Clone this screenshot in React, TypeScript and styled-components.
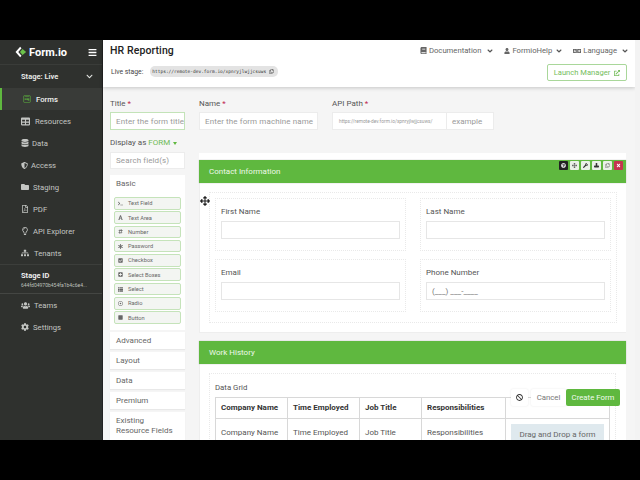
import React from "react";
import styled, { createGlobalStyle } from "styled-components";
import {
  FaAngleDown, FaBars, FaBook, FaUser, FaLanguage, FaExternalLinkAlt, FaRegCopy, FaDatabase, FaShieldAlt, FaFolder,
  FaRegFilePdf, FaRegLightbulb, FaSitemap, FaUsers, FaCog, FaArrowsAlt, FaTerminal, FaFont, FaHashtag, FaAsterisk,
  FaCheckSquare, FaPlusSquare, FaThList, FaRegDotCircle, FaStop, FaBan, FaWrench, FaStamp, FaTimes, FaQuestionCircle,
  FaWpforms, FaTable, FaChevronDown,
} from "react-icons/fa";

const Global = createGlobalStyle`
  html, body { margin: 0; padding: 0; background: #000; }
  body { font-family: Roboto, "Liberation Sans", sans-serif; }
  * { box-sizing: border-box; }
`;

const Screen = styled.div`
  width: 640px; height: 480px; padding: 40px 0; background: #000; overflow: hidden;
`;
const Frame = styled.div`
  position: relative; width: 640px; height: 400px; display: flex; overflow: hidden; background: #f5f5f5;
`;
const Sidebar = styled.nav`
  width: 103px; flex: none; background: #2f312e; color: #d9dbd8; display: flex; flex-direction: column;
  border-right: 1px solid #222;
`;
const Brand = styled.div`
  height: 25px; display: flex; align-items: center; padding: 0 5px 0 15px; color: #fff;
  border-bottom: 1px solid #3a3c39; flex: none;
`;
const BrandName = styled.span`
  font-size: 11px; font-weight: 700; margin-left: 2px; flex: 1;
`;
const StageRow = styled.div`
  height: 23px; display: flex; align-items: center; justify-content: space-between; padding: 0 9px 0 21px;
  font-size: 7.5px; font-weight: 700; color: #e4e6e3; flex: none;
`;
const NavItem = styled.div<{ $active?: boolean; $gap: number }>`
  height: 22px; display: flex; align-items: center; gap: ${p => p.$gap}px; font-size: 7.7px; flex: none;
  padding-left: ${p => (p.$active ? 23 : 21)}px; color: ${p => (p.$active ? "#f2f2f2" : "#c4c6c3")};
  font-weight: ${p => (p.$active ? 500 : 400)};
  background: ${p => (p.$active ? "#393b38" : "transparent")};
  box-shadow: ${p => (p.$active ? "inset 2px 0 0 #5fb83f" : "none")};
`;
const StageId = styled.div`
  height: 30px; flex: none; padding: 6px 0 0 21px; border-top: 1px solid #3c3e3b; border-bottom: 1px solid #444643;
  display: flex; flex-direction: column; gap: 2px;
`;
const StageIdLabel = styled.span`
  font-size: 7.5px; font-weight: 700; color: #eee; line-height: 9px;
`;
const StageIdValue = styled.span`
  font-size: 5px; color: #bfc1be; line-height: 7px; white-space: nowrap;
`;
const Main = styled.div`
  flex: 1; min-width: 0; display: flex; flex-direction: column;
`;
const Header = styled.header`
  height: 47px; width: 532px; flex: none; background: #fff; box-shadow: 0 1px 4px rgba(0,0,0,.2);
  display: flex; justify-content: space-between; padding: 3px 8px 0 7px; position: relative;
`;
const HeadLeft = styled.div`
  display: flex; flex-direction: column; gap: 8px; padding-top: 1px;
`;
const Title = styled.h1`
  margin: 0; font-size: 10.5px; font-weight: 500; color: #222; line-height: 14px; letter-spacing: .1px;
`;
const LiveRow = styled.div`
  display: flex; align-items: center; gap: 7px; font-size: 6.8px; color: #444; padding-left: 1px;
`;
const UrlPill = styled.span`
  display: inline-flex; align-items: center; gap: 3px; height: 11px; padding: 0 4px 0 2px; border-radius: 5px;
  background: #e3e3e3; font-family: "DejaVu Sans Mono", monospace; font-size: 4.5px; color: #333;
`;
const HeadRight = styled.div`
  display: flex; flex-direction: column; align-items: flex-end; gap: 7px;
`;
const TopLinks = styled.div`
  display: flex; gap: 10px; height: 14px; align-items: center; padding-top: 1px; margin-right: -2px;
`;
const TopLink = styled.span`
  display: inline-flex; align-items: center; gap: 2px; font-size: 7.7px; color: #666;
`;
const LinkChevron = styled(FaAngleDown)<{ $gap: number }>`
  margin-left: ${p => p.$gap}px; font-size: 8px; color: #555;
`;
const LaunchBtn = styled.span`
  display: inline-flex; align-items: center; gap: 4px; height: 17px; width: 80px; justify-content: center;
  border: 1px solid #a9d79a; border-radius: 2px; font-size: 7.6px; color: #75bd5c; background: #fff;
`;
const Content = styled.div`
  flex: 1; min-height: 0; display: flex; flex-direction: column; padding: 12px 14px 0 7px; overflow: hidden;
`;
const TopForm = styled.div`
  display: flex; flex: none; gap: 14px;
`;
const FieldBlock = styled.div<{ $w: number }>`
  width: ${p => p.$w}px; display: flex; flex-direction: column; gap: 3px; flex: none;
`;
const Label = styled.label`
  font-size: 8px; line-height: 10px; color: #555; height: 10px;
`;
const Req = styled.span`
  color: #c0264e;
`;
const TextInput = styled.div<{ $focus?: boolean }>`
  height: 18px; padding: 0 5px; display: flex; align-items: center; background: #fff; overflow: hidden; white-space: nowrap; flex: none;
  border: 1px solid ${p => (p.$focus ? "#c3e3b8" : "#ececec")}; font-size: 8px; color: #999; letter-spacing: .1px;
`;
const PathRow = styled.div`
  display: flex; width: 162px; height: 18px;
`;
const PathPrefix = styled.div`
  width: 115px; display: flex; align-items: center; padding-left: 6px; border: 1px solid #ececec; background: #fff;
  font-size: 4.8px; color: #999; white-space: nowrap;
`;
const PathInput = styled.div`
  flex: 1; display: flex; align-items: center; padding-left: 5px; border: 1px solid #ececec; border-left: 0;
  background: #fff; font-size: 8px; color: #999;
`;
const Columns = styled.div`
  display: flex; flex: 1; min-height: 0; margin-top: 8px; gap: 14px;
`;
const Palette = styled.aside`
  width: 75px; flex: none; display: flex; flex-direction: column;
`;
const DisplayAs = styled.div`
  font-size: 8px; color: #555; line-height: 10px; height: 10px; display: flex; align-items: center; gap: 2px; flex: none;
`;
const Green = styled.span`
  color: #6fbb55;
`;
const Caret = styled.span`
  width: 0; height: 0; border-left: 2.5px solid transparent; border-right: 2.5px solid transparent; border-top: 3px solid #5fb83f; margin-left: 1px;
`;
const Search = styled(TextInput)`
  margin-top: 4px; height: 17px; margin-bottom: 6px;
`;
const Accordion = styled.div<{ $tall?: boolean }>`
  background: #fff; padding: ${p => (p.$tall ? "4px 0 0 6px" : "0 0 0 6px")}; font-size: 8px; color: #666;
  min-height: ${p => (p.$tall ? "32px" : "17px")}; line-height: ${p => (p.$tall ? "10.5px" : "17px")};
  box-shadow: 0 1px 1px rgba(0,0,0,.05); margin-bottom: 3px; flex: none;
`;
const BasicHead = styled.div`
  background: #fff; height: 17px; line-height: 17px; padding-left: 6px; font-size: 8px; color: #666; flex: none;
`;
const BasicBody = styled.div`
  background: #fff; padding: 5px 4px 6px 4px; display: flex; flex-direction: column; gap: 1.8px; margin-bottom: 2px; flex: none;
`;
const Comp = styled.div`
  height: 12.5px; flex: none; display: flex; align-items: center; gap: 5px; padding-left: 3px; border: 1px solid #c5e3ba;
  border-radius: 2px; background: #f3f5f2; color: #666; font-size: 5.7px; white-space: nowrap;
`;
const Canvas = styled.section`
  flex: 1; min-width: 0; background: #fff; margin-top: 15px; padding-top: 7px; display: flex; flex-direction: column; width: 427px;
`;
const PanelBar = styled.div`
  position: relative; height: 23px; flex: none; background: #5fb83f; color: #eef8ea; font-size: 8px;
  display: flex; align-items: center; padding-left: 10px; box-shadow: 0 0 1px rgba(0,0,0,.3);
`;
const Tools = styled.div`
  position: absolute; top: 1px; right: 3px; display: flex; gap: 2px;
`;
const Tool = styled.span<{ $bg: string; $fg: string }>`
  width: 9px; height: 9px; display: flex; align-items: center; justify-content: center; font-size: 5px;
  background: ${p => p.$bg}; color: ${p => p.$fg}; border-radius: 1px;
`;
const ContactBody = styled.div`
  height: 150px; padding: 9px 0 0 9px; flex: none; background: #fff; border-bottom: 1px solid #eee; border-left: 1px solid #eee;
`;
const Dotted = styled.div`
  border: 1px dotted #e9e9e9; width: 408px; height: 131px;
  display: grid; grid-template-columns: 191px 191px; column-gap: 14px; row-gap: 8px; padding: 5px 0 0 5px;
  grid-auto-rows: 53px;
`;
const FieldCell = styled.div`
  border: 1px dotted #e9e9e9; padding: 8px 5px 0 5px; display: flex; flex-direction: column; gap: 4px;
`;
const CellLabel = styled.span`
  font-size: 8px; color: #555; line-height: 10px;
`;
const CellInput = styled.div`
  height: 18px; border: 1px solid #e6e6e6; background: #fff; display: flex; align-items: center; padding-left: 5px;
  font-size: 8px; color: #777;
`;
const WorkBody = styled.div`
  flex: 1; padding: 9px 0 0 9px; background: #fff; overflow: hidden; border-left: 1px solid #eee;
`;
const GridBox = styled.div`
  border: 1px dotted #e9e9e9; width: 407px; height: 100px; padding: 9px 0 0 5px;
`;
const GridLabel = styled.div`
  font-size: 7.8px; color: #555; line-height: 10px; margin-bottom: 4px;
`;
const GridTable = styled.div`
  display: grid; grid-template-columns: 72px 72px 62px 84px 104px; width: 394px;
  border-top: 1px solid #d8d8d8; border-left: 1px solid #d8d8d8;
`;
const Cell = styled.div<{ $head?: boolean }>`
  height: ${p => (p.$head ? "21px" : "40px")}; border-right: 1px solid #d8d8d8; border-bottom: 1px solid #d8d8d8; padding: 0 0 0 5px;
  display: flex; align-items: ${p => (p.$head ? "center" : "flex-start")}; font-size: 8px; color: ${p => (p.$head ? "#333" : "#555")};
  font-weight: ${p => (p.$head ? 700 : 400)}; white-space: nowrap;
  line-height: 14px; padding-top: ${p => (p.$head ? "0" : "7px")};
`;
const DropCell = styled(Cell)`
  padding: 5px 5px 0 5px;
`;
const DropZone = styled.div`
  width: 93px; height: 30px; background: #dfe9ee; color: #666; display: flex; justify-content: center; padding-top: 4px; font-size: 8px; font-weight: 400;
`;
const FloatActions = styled.div`
  position: absolute; left: 511px; top: 349px; display: flex; align-items: center; gap: 3px;
`;
const BanBtn = styled.span`
  width: 17px; height: 17px; background: #fff; display: flex; align-items: center; justify-content: center; color: #333; border-radius: 2px;
  font-size: 7px; box-shadow: 0 0 2px rgba(0,0,0,.1);
`;
const CancelBtn = styled.span`
  width: 35px; height: 17px; background: #fff; display: flex; align-items: center; justify-content: center; color: #777; font-size: 7.8px;
  border-radius: 2px; box-shadow: 0 0 2px rgba(0,0,0,.1);
`;
const CreateBtn = styled.span`
  width: 54px; height: 17px; margin-left: -3px; background: #5fb83f; color: #f2faef; display: flex; align-items: center; justify-content: center; font-size: 7.8px; border-radius: 2px;
`;
const DragCursor = styled.span`
  position: absolute; left: 200px; top: 156px; color: #222; display: flex; font-size: 10px;
`;
const Gutter = styled.div`
  position: absolute; right: 0; top: 0; width: 5px; height: 100%; background: #f3f3f3;
`;
const Spacer = styled.div`
  height: 8px; flex: none; background: #f5f5f5;
`;

const FormioLogo = () => (
  <svg width="12" height="12" viewBox="0 0 14 14" aria-hidden="true">
    <path d="M6 1 L0.6 7 L6 13 L7.6 11.4 L3.8 7 L7.6 2.6 Z" fill="#fff" />
    <path d="M8.8 3.4 L13 7 L8.8 10.6 L5.8 7 Z" fill="#6cc24a" />
  </svg>
);

const navTop = [
  { icon: <FaTable size={9} />, label: "Resources", gap: 5 },
  { icon: <FaDatabase size={8} />, label: "Data", gap: 3 },
  { icon: <FaShieldAlt size={7} />, label: "Access", gap: 3 },
  { icon: <FaFolder size={8} />, label: "Staging", gap: 4 },
  { icon: <FaRegFilePdf size={8} />, label: "PDF", gap: 4 },
  { icon: <FaRegLightbulb size={8} />, label: "API Explorer", gap: 4 },
  { icon: <FaSitemap size={8} />, label: "Tenants", gap: 5 },
];

const comps = [
  { icon: <FaTerminal size={5} />, label: "Text Field" },
  { icon: <FaFont size={5} />, label: "Text Area" },
  { icon: <FaHashtag size={5} />, label: "Number" },
  { icon: <FaAsterisk size={5} />, label: "Password" },
  { icon: <FaCheckSquare size={5} />, label: "Checkbox" },
  { icon: <FaPlusSquare size={5} />, label: "Select Boxes" },
  { icon: <FaThList size={5} />, label: "Select" },
  { icon: <FaRegDotCircle size={5} />, label: "Radio" },
  { icon: <FaStop size={5} />, label: "Button" },
];

export default function App() {
  return (
    <Screen>
      <Global />
      <Frame>
        <Sidebar>
          <Brand>
            <FormioLogo />
            <BrandName>Form.io</BrandName>
            <FaBars size={9} />
          </Brand>
          <StageRow>
            Stage: Live
            <FaChevronDown size={7} />
          </StageRow>
          <NavItem $active $gap={5}>
            <FaWpforms size={8} color="#5fb83f" />
            Forms
          </NavItem>
          {navTop.map(n => (
            <NavItem key={n.label} $gap={n.gap}>
              {n.icon}
              {n.label}
            </NavItem>
          ))}
          <StageId>
            <StageIdLabel>Stage ID</StageIdLabel>
            <StageIdValue>644fd04970b454fa1b4c6e4...</StageIdValue>
          </StageId>
          <NavItem $gap={4}>
            <FaUsers size={9} />
            Teams
          </NavItem>
          <NavItem $gap={4}>
            <FaCog size={8} />
            Settings
          </NavItem>
        </Sidebar>
        <Main>
          <Header>
            <HeadLeft>
              <Title>HR Reporting</Title>
              <LiveRow>
                Live stage:
                <UrlPill>
                  https://remote-dev.form.io/xpnryjlwjjcsuws
                  <FaRegCopy size={5} color="#555" />
                </UrlPill>
              </LiveRow>
            </HeadLeft>
            <HeadRight>
              <TopLinks>
                <TopLink>
                  <FaBook size={7} />
                  Documentation
                  <LinkChevron $gap={3} />
                </TopLink>
                <TopLink>
                  <FaUser size={6} />
                  FormioHelp
                  <LinkChevron $gap={1} />
                </TopLink>
                <TopLink>
                  <FaLanguage size={8} />
                  Language
                  <LinkChevron $gap={2} />
                </TopLink>
              </TopLinks>
              <LaunchBtn>
                Launch Manager
                <FaExternalLinkAlt size={6} />
              </LaunchBtn>
            </HeadRight>
          </Header>
          <Content>
            <TopForm>
              <FieldBlock $w={75}>
                <Label>
                  Title <Req>*</Req>
                </Label>
                <TextInput $focus>Enter the form title</TextInput>
              </FieldBlock>
              <FieldBlock $w={119}>
                <Label>
                  Name <Req>*</Req>
                </Label>
                <TextInput>Enter the form machine name</TextInput>
              </FieldBlock>
              <FieldBlock $w={162}>
                <Label>
                  API Path <Req>*</Req>
                </Label>
                <PathRow>
                  <PathPrefix>https://remote-dev.form.io/xpnryjlwjjcsuws/</PathPrefix>
                  <PathInput>example</PathInput>
                </PathRow>
              </FieldBlock>
            </TopForm>
            <Columns>
              <Palette>
                <DisplayAs>
                  Display as <Green>FORM</Green>
                  <Caret />
                </DisplayAs>
                <Search>Search field(s)</Search>
                <BasicHead>Basic</BasicHead>
                <BasicBody>
                  {comps.map(c => (
                    <Comp key={c.label}>
                      {c.icon}
                      {c.label}
                    </Comp>
                  ))}
                </BasicBody>
                <Accordion>Advanced</Accordion>
                <Accordion>Layout</Accordion>
                <Accordion>Data</Accordion>
                <Accordion>Premium</Accordion>
                <Accordion $tall>
                  Existing
                  <br />
                  Resource Fields
                </Accordion>
              </Palette>
              <Canvas>
                <PanelBar>
                  Contact Information
                  <Tools>
                    <Tool $bg="#222" $fg="#ddd">
                      <FaQuestionCircle />
                    </Tool>
                    <Tool $bg="#e9f0e7" $fg="#555">
                      <FaArrowsAlt />
                    </Tool>
                    <Tool $bg="#e9f0e7" $fg="#333">
                      <FaWrench />
                    </Tool>
                    <Tool $bg="#e9f0e7" $fg="#333">
                      <FaStamp />
                    </Tool>
                    <Tool $bg="#e9f0e7" $fg="#777">
                      <FaRegCopy />
                    </Tool>
                    <Tool $bg="#c5344f" $fg="#fff">
                      <FaTimes />
                    </Tool>
                  </Tools>
                </PanelBar>
                <ContactBody>
                  <Dotted>
                    {["First Name", "Last Name", "Email"].map(l => (
                      <FieldCell key={l}>
                        <CellLabel>{l}</CellLabel>
                        <CellInput />
                      </FieldCell>
                    ))}
                    <FieldCell>
                      <CellLabel>Phone Number</CellLabel>
                      <CellInput>(___) ___-____</CellInput>
                    </FieldCell>
                  </Dotted>
                </ContactBody>
                <Spacer />
                <PanelBar>Work History</PanelBar>
                <WorkBody>
                  <GridBox>
                    <GridLabel>Data Grid</GridLabel>
                    <GridTable>
                      <Cell $head>Company Name</Cell>
                      <Cell $head>Time Employed</Cell>
                      <Cell $head>Job Title</Cell>
                      <Cell $head>Responsibilities</Cell>
                      <Cell $head />
                      <Cell>Company Name</Cell>
                      <Cell>Time Employed</Cell>
                      <Cell>Job Title</Cell>
                      <Cell>Responsibilities</Cell>
                      <DropCell>
                        <DropZone>Drag and Drop a form</DropZone>
                      </DropCell>
                    </GridTable>
                  </GridBox>
                </WorkBody>
              </Canvas>
            </Columns>
          </Content>
        </Main>
        <Gutter />
        <DragCursor>
          <FaArrowsAlt />
        </DragCursor>
        <FloatActions>
          <BanBtn>
            <FaBan />
          </BanBtn>
          <CancelBtn>Cancel</CancelBtn>
          <CreateBtn>Create Form</CreateBtn>
        </FloatActions>
      </Frame>
    </Screen>
  );
}
